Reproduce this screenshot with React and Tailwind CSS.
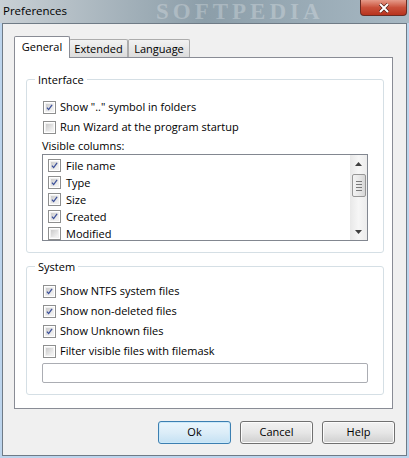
import React from "react";

const font = "font-['Open_Sans','Noto_Sans',sans-serif]";

function CheckBox({ checked }) {
  return (
    <span className="w-[13px] h-[13px] shrink-0 border border-[#8e8f8f] bg-white p-px">
      <span className="flex w-full h-full items-center justify-center bg-gradient-to-br from-[#cbcbcb] to-[#f6f6f6] border border-[#f0f0f0]">
        {checked && (
          <svg width="9" height="9" viewBox="0 0 9 9">
            <path d="M1.2 4.6 L3.4 7.2 L7.8 1.2" fill="none" stroke="#3a4f9a" strokeWidth="1.6" />
          </svg>
        )}
      </span>
    </span>
  );
}

function Option({ checked, label }) {
  return (
    <div className="flex items-center gap-[4px] h-[20px] pl-[16px]">
      <CheckBox checked={checked} />
      <span className="text-[11px] leading-[16px] text-black">{label}</span>
    </div>
  );
}

function Group({ title, className, children }) {
  return (
    <div className={`ml-[11px] w-[358px] border border-[#d5dfe5] rounded-[3px] ${className}`}>
      <div className="-mt-[8px] ml-[8px] px-[3px] h-[16px] w-fit bg-white text-[11px] leading-[16px] text-black">
        {title}
      </div>
      {children}
    </div>
  );
}

function Button({ label, primary }) {
  return (
    <button
      className={`w-[73px] h-[23px] rounded-[3px] border text-[11px] text-black ${
        primary
          ? "border-[#3c7fb1] bg-gradient-to-b from-[#eaf6fd] via-[#dcedf8] to-[#c4e1f3] shadow-[inset_0_0_0_1px_#cbe9fa]"
          : "border-[#707070] bg-gradient-to-b from-[#f2f2f2] via-[#e6e6e6] to-[#cfcfcf] shadow-[inset_0_0_0_1px_#fcfcfc]"
      }`}
    >
      {label}
    </button>
  );
}

const columns = [
  ["File name", true],
  ["Type", true],
  ["Size", true],
  ["Created", true],
  ["Modified", false],
];

export default function App() {
  return (
    <div className={`w-[409px] h-[458px] bg-[#bcd4ec] flex flex-col overflow-hidden ${font}`}>
      {/* title bar */}
      <div className="relative h-[23px] shrink-0 overflow-hidden bg-gradient-to-r from-[#c9d0d5] via-[#8c9ea9] to-[#a7b8c3]">
        <span className="absolute left-[3px] top-[3px] text-[11.5px] leading-[16px] text-black">Preferences</span>
        <span className="absolute left-[156px] top-[1px] text-[23px] leading-[22px] font-bold tracking-[4px] text-white/25 font-['Liberation_Serif',serif]">
          SOFTPEDIA
        </span>
        <div className="absolute left-[360px] top-0 w-[47px] h-[16px] rounded-b-[4px] border border-t-0 border-[#6b2b22] bg-gradient-to-b from-[#e59a8a] via-[#c9503a] to-[#b8331d] flex items-center justify-center">
          <svg width="12" height="10" viewBox="0 0 12 10">
            <path d="M2 1 L10 9 M10 1 L2 9" stroke="#4a1a14" strokeWidth="3.2" />
            <path d="M2 1 L10 9 M10 1 L2 9" stroke="#ffffff" strokeWidth="2" />
          </svg>
        </div>
      </div>

      {/* client area */}
      <div className="ml-[2px] w-[405px] h-[433px] shrink-0 border border-[#6f7b86] bg-[#f0f0f0] flex flex-col">
        {/* tabs */}
        <div className="flex items-end h-[21px] mt-[12px] ml-[11px] text-[11px] text-black">
          <div className="relative z-10 -mb-px h-[22px] w-[56px] bg-white border border-b-0 border-[#898c95] rounded-t-[2px] flex items-start justify-center pt-[2px] leading-[16px]">
            General
          </div>
          <div className="h-[18px] w-[59px] -ml-px border border-b-0 border-[#acacac] rounded-t-[2px] bg-gradient-to-b from-[#f2f2f2] to-[#dcdcdc] flex items-center justify-center leading-[16px]">
            Extended
          </div>
          <div className="h-[18px] w-[62px] border border-b-0 border-[#acacac] rounded-t-[2px] bg-gradient-to-b from-[#f2f2f2] to-[#dcdcdc] flex items-center justify-center leading-[16px]">
            Language
          </div>
        </div>

        {/* tab panel */}
        <div className="ml-[11px] w-[379px] h-[352px] shrink-0 bg-white border border-[#898c95] flex flex-col">
          <Group title="Interface" className="mt-[21px] h-[174px]">
            <div className="mt-[9px]">
              <Option checked label='Show ".." symbol in folders' />
              <Option label="Run Wizard at the program startup" />
            </div>
            <div className="mt-[1px] ml-[15px] h-[16px] text-[11px] leading-[16px] text-black">Visible columns:</div>
            <div className="ml-[15px] w-[326px] h-[87px] border border-[#828790] flex">
              <div className="flex-1 pt-[2px] pl-[5px]">
                {columns.map(([name, on]) => (
                  <div key={name} className="flex items-center gap-[5px] h-[17px]">
                    <CheckBox checked={on} />
                    <span className="text-[11px] leading-[16px] text-black">{name}</span>
                  </div>
                ))}
              </div>
              {/* scrollbar */}
              <div className="w-[17px] h-full bg-gradient-to-r from-[#e8e8e8] via-[#f6f6f6] to-[#ececec] flex flex-col items-center">
                <div className="h-[17px] flex items-center justify-center">
                  <svg width="7" height="4" viewBox="0 0 7 4">
                    <path d="M0 4 L3.5 0 L7 4 Z" fill="#404040" />
                  </svg>
                </div>
                <div className="mt-[2px] w-[14px] h-[23px] rounded-[2px] border border-[#979797] bg-gradient-to-r from-[#f3f3f3] via-[#e8e8e8] to-[#d6d6d6] flex flex-col items-center justify-center gap-[2px]">
                  <span className="w-[6px] h-px bg-[#7a7a7a]" />
                  <span className="w-[6px] h-px bg-[#7a7a7a]" />
                  <span className="w-[6px] h-px bg-[#7a7a7a]" />
                  <span className="w-[6px] h-px bg-[#7a7a7a]" />
                </div>
                <div className="mt-auto h-[17px] flex items-center justify-center">
                  <svg width="7" height="4" viewBox="0 0 7 4">
                    <path d="M0 0 L3.5 4 L7 0 Z" fill="#404040" />
                  </svg>
                </div>
              </div>
            </div>
          </Group>

          <Group title="System" className="mt-[13px] h-[129px]">
            <div className="mt-[6px]">
              <Option checked label="Show NTFS system files" />
              <Option checked label="Show non-deleted files" />
              <Option checked label="Show Unknown files" />
              <Option label="Filter visible files with filemask" />
            </div>
            <div className="mt-[2px] ml-[15px] w-[326px] h-[20px] border border-[#abadb3] rounded-[2px] bg-white" />
          </Group>
        </div>

        {/* buttons */}
        <div className="mt-[12px] mr-[11px] flex justify-end gap-[9px]">
          <Button label="Ok" primary />
          <Button label="Cancel" />
          <Button label="Help" />
        </div>
      </div>
    </div>
  );
}
